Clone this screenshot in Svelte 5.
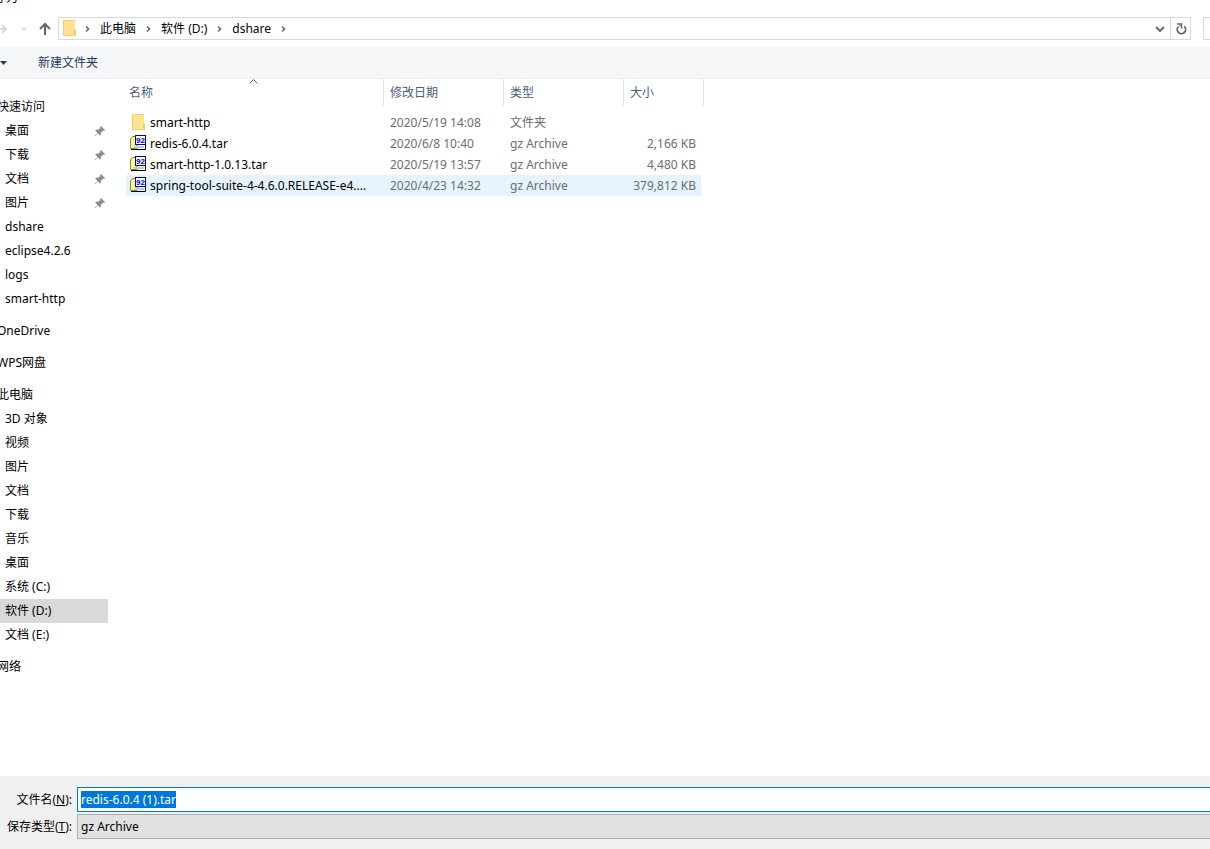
<script lang="ts">
    import { onMount } from 'svelte';

    type NavItem = { name: string; pinned?: boolean; selected?: boolean };
    type NavGroup = { name: string; items: NavItem[] };

    let path = ['此电脑', '软件 (D:)', 'dshare'];

    let groups: NavGroup[] = [
        {
            name: '快速访问',
            items: [
                { name: '桌面', pinned: true },
                { name: '下载', pinned: true },
                { name: '文档', pinned: true },
                { name: '图片', pinned: true },
                { name: 'dshare' },
                { name: 'eclipse4.2.6' },
                { name: 'logs' },
                { name: 'smart-http' }
            ]
        },
        { name: 'OneDrive', items: [] },
        { name: 'WPS网盘', items: [] },
        {
            name: '此电脑',
            items: [
                { name: '3D 对象' },
                { name: '视频' },
                { name: '图片' },
                { name: '文档' },
                { name: '下载' },
                { name: '音乐' },
                { name: '桌面' },
                { name: '系统 (C:)' },
                { name: '软件 (D:)', selected: true },
                { name: '文档 (E:)' }
            ]
        },
        { name: '网络', items: [] }
    ];

    let files = [
        { name: 'smart-http', date: '2020/5/19 14:08', type: '文件夹', size: '', folder: true },
        { name: 'redis-6.0.4.tar', date: '2020/6/8 10:40', type: 'gz Archive', size: '2,166 KB' },
        { name: 'smart-http-1.0.13.tar', date: '2020/5/19 13:57', type: 'gz Archive', size: '4,480 KB' },
        { name: 'spring-tool-suite-4-4.6.0.RELEASE-e4....', date: '2020/4/23 14:32', type: 'gz Archive', size: '379,812 KB', hover: true }
    ];

    let fileName = 'redis-6.0.4 (1).tar';
    let fileInput: HTMLInputElement;

    onMount(() => {
        fileInput.focus();
        fileInput.select();
    });
</script>

{#snippet folderIcon()}
    <svg class="icon" width="16" height="17" viewBox="0 0 16 17" aria-hidden="true">
        <path d="M2 0h12v9l1 1v6H2z" fill="#ffe08a" />
        <path d="M3 1h10v14H3z" fill="#ffe391" />
        <path d="M13 9.500l2 1V16h-2z" fill="#f3ca62" />
        <path d="M2.500 0v15.500H15M2 .5h12" fill="none" stroke="#f0cd70" />
    </svg>
{/snippet}

{#snippet archiveIcon()}
    <svg class="icon" width="16" height="17" viewBox="0 0 16 17" aria-hidden="true">
        <path d="M.5 13.500V4l2-2.500H7v12z" fill="#ffff66" stroke="#8c8c30" />
        <path d="M2 13V4h2v7h10v2z" fill="#f4f4b0" />
        <path d="M4 11h10v2H4z" fill="#c8c8c8" />
        <path d="M1 14.500h14.500V10" fill="none" stroke="#000" />
        <rect x="5" y="0" width="11" height="10" fill="#0000c0" />
        <rect x="6" y="1" width="9" height="8" fill="#fff" />
        <text x="6" y="8" class="badge">92</text>
    </svg>
{/snippet}

{#snippet chevron()}
    <svg class="chevron" width="7" height="8" viewBox="0 0 7 8" aria-hidden="true">
        <path d="M2 1.500L4.500 4 2 6.500" fill="none" stroke="#666" stroke-width="1.600" />
    </svg>
{/snippet}

<div class="dialog">
    <header class="title">另存为</header>

    <div class="address-row">
        <button class="nav forward" aria-label="前进" disabled>
            <svg width="12" height="14" viewBox="0 0 12 14">
                <path d="M0 7h10M6 3l4 4-4 4" fill="none" stroke="#d2d2d2" stroke-width="1.500" />
            </svg>
        </button>
        <button class="nav recent" aria-label="最近浏览的位置" disabled>
            <svg width="8" height="6" viewBox="0 0 8 6">
                <path d="M1.500 1.500L4 4l2.500-2.500" fill="none" stroke="#d2d2d2" stroke-width="1.200" />
            </svg>
        </button>
        <button class="nav up" aria-label="上移">
            <svg width="14" height="14" viewBox="0 0 14 14">
                <path d="M7 13V2M2 7l5-5 5 5" fill="none" stroke="#666" stroke-width="2" />
            </svg>
        </button>
        <nav class="address" aria-label="地址">
            {@render folderIcon()}
            {@render chevron()}
            {#each path as part}
                <a href="#top">{part}</a>
                {@render chevron()}
            {/each}
            <button class="history" aria-label="以前的位置">
                <svg width="10" height="8" viewBox="0 0 10 8">
                    <path d="M1 2l4 4 4-4" fill="none" stroke="#666" stroke-width="1.800" />
                </svg>
            </button>
            <button class="refresh" aria-label="刷新">
                <svg width="12" height="14" viewBox="0 0 12 14">
                    <path d="M9.200 4.300A4.200 4.200 0 1 1 3 5" fill="none" stroke="#666" stroke-width="1.800" />
                    <path d="M2 2h4.500v4.500" fill="none" stroke="#666" stroke-width="1.500" />
                    <path d="M6 2.500L3 5.500" fill="none" stroke="#666" />
                </svg>
            </button>
        </nav>
        <div class="search"></div>
    </div>

    <div class="toolbar">
        <button class="organize" aria-label="组织">
            <svg width="8" height="4" viewBox="0 0 8 4"><path d="M0 0h7L3.500 4z" fill="#1e395b" /></svg>
        </button>
        <button class="new-folder">新建文件夹</button>
    </div>

    <main>
        <aside>
            {#each groups as group}
                <section>
                    <a class="group" href="#top">{group.name}</a>
                    {#each group.items as item}
                        <a class="item" class:selected={item.selected} href="#top">
                            <span>{item.name}</span>
                            {#if item.pinned}
                                <svg width="12" height="12" viewBox="0 0 12 12" aria-hidden="true">
                                    <path d="M7 1l4 4-1 1-1-.3L7.200 7.500 7 9.500l-1 1-2.200-2.200L1 11.300l-.5-.5 3-2.800L1.300 5.800l1-1 2.200-.2L6.300 3 6 2z" fill="#8e8e8e" />
                                </svg>
                            {/if}
                        </a>
                    {/each}
                </section>
            {/each}
        </aside>

        <div class="files">
            <table>
                <colgroup>
                    <col class="col-name" />
                    <col class="col-date" />
                    <col class="col-type" />
                    <col class="col-size" />
                </colgroup>
                <thead>
                    <tr>
                        <th>
                            名称
                            <svg class="sort" width="9" height="5" viewBox="0 0 9 5" aria-hidden="true">
                                <path d="M.5 4.500l4-4 4 4" fill="none" stroke="#666" />
                            </svg>
                        </th>
                        <th>修改日期</th>
                        <th>类型</th>
                        <th>大小</th>
                    </tr>
                </thead>
                <tbody>
                    {#each files as file}
                        <tr class:hover={file.hover}>
                            <td>
                                <div class="name">
                                    {#if file.folder}
                                        {@render folderIcon()}
                                    {:else}
                                        {@render archiveIcon()}
                                    {/if}
                                    <span>{file.name}</span>
                                </div>
                            </td>
                            <td>{file.date}</td>
                            <td>{file.type}</td>
                            <td>{file.size}</td>
                        </tr>
                    {/each}
                </tbody>
            </table>
        </div>
    </main>

    <footer>
        <label for="file-name">文件名(<u>N</u>):</label>
        <input id="file-name" type="text" bind:this={fileInput} bind:value={fileName} />
        <label for="file-type">保存类型(<u>T</u>):</label>
        <select id="file-type">
            <option>gz Archive</option>
        </select>
    </footer>
</div>

<style>
    :global(body) {
        margin: 0;
        background: #fff;
    }

    .dialog {
        display: flex;
        flex-direction: column;
        min-height: 100vh;
        overflow: hidden;
        font-family: 'Noto Sans', 'Noto Sans CJK SC', sans-serif;
        font-size: 12px;
        line-height: 16px;
        color: #000;
    }

    button, input, select {
        font: inherit;
        color: inherit;
        border: 0;
        border-radius: 0;
        margin: 0;
        padding: 0;
        background: none;
    }

    a {
        color: inherit;
        text-decoration: none;
    }

    svg {
        display: block;
        flex: none;
    }

    .title {
        display: flex;
        align-items: flex-end;
        height: 6px;
        margin: 0 0 11px -18px;
        overflow: hidden;
    }

    .address-row {
        display: flex;
        align-items: center;
        height: 23px;
        margin-bottom: 7px;
    }

    .nav {
        display: flex;
        justify-content: center;
        flex: none;
    }

    .forward {
        width: 16px;
        justify-content: flex-start;
        margin-left: -4px;
    }

    .recent {
        width: 24px;
    }

    .up {
        width: 18px;
        margin-right: 4px;
    }

    .address {
        display: flex;
        flex: 1;
        align-items: center;
        box-sizing: border-box;
        height: 23px;
        padding-left: 2px;
        border: 1px solid #d9d9d9;
    }

    .address a {
        white-space: nowrap;
    }

    .address .chevron {
        margin: 0 9px;
    }

    .address .icon + .chevron {
        margin-left: 7px;
    }

    .history {
        display: flex;
        justify-content: center;
        width: 20px;
        margin-left: auto;
    }

    .refresh {
        display: flex;
        align-items: center;
        justify-content: center;
        align-self: stretch;
        width: 20px;
        border-left: 1px solid #d9d9d9;
    }

    .search {
        box-sizing: border-box;
        width: 7px;
        height: 23px;
        margin-left: 12px;
        border: 1px solid #d9d9d9;
        border-right: 0;
    }

    .toolbar {
        display: flex;
        align-items: stretch;
        height: 31px;
        border-bottom: 1px solid #e8edf2;
        background: #f5f6f7;
        color: #1e395b;
    }

    .organize {
        width: 8px;
    }

    .new-folder {
        margin-left: 20px;
        padding: 0 10px;
    }

    main {
        display: flex;
        flex: 1;
    }

    aside {
        flex: none;
        width: 108px;
        padding-top: 16px;
    }

    section {
        margin-bottom: 8px;
    }

    .group, .item {
        display: flex;
        align-items: center;
        height: 24px;
        white-space: nowrap;
    }

    .group {
        margin-left: -3px;
    }

    .item {
        justify-content: space-between;
        padding: 0 2px 0 5px;
    }

    .selected {
        background: #d9d9d9;
    }

    .files {
        flex: 1;
        padding-left: 18px;
    }

    table {
        width: 578px;
        table-layout: fixed;
        border-collapse: separate;
        border-spacing: 0;
    }

    .col-name {
        width: 257px;
    }

    .col-date, .col-type {
        width: 120px;
    }

    .col-size {
        width: 81px;
    }

    th {
        position: relative;
        height: 27px;
        padding: 0 6px;
        border-left: 1px solid #e5e5e5;
        font-weight: normal;
        text-align: left;
        color: #4c607a;
    }

    th:first-child {
        padding-left: 3px;
        border-left: 0;
    }

    th:last-child {
        border-right: 1px solid #e5e5e5;
    }

    .sort {
        position: absolute;
        top: 0;
        left: 123px;
    }

    tbody::before {
        content: '';
        display: block;
        height: 6px;
    }

    td {
        height: 21px;
        padding: 0 0 0 7px;
        color: #6d6d6d;
        white-space: nowrap;
    }

    td:first-child {
        padding-left: 4px;
        color: #000;
    }

    td:last-child {
        padding-right: 5px;
        border-right: 3px solid transparent;
        background-clip: padding-box;
        text-align: right;
    }

    .hover td {
        background-color: #e5f3ff;
    }

    .name {
        display: flex;
        align-items: center;
        gap: 4px;
    }

    .badge {
        font: bold 8px 'Liberation Sans', sans-serif;
        fill: #0000c0;
    }

    footer {
        display: grid;
        grid-template-columns: 72px 1fr;
        grid-auto-rows: 25px;
        gap: 2px 5px;
        align-items: center;
        padding: 11px 0 10px;
        background: #f0f0f0;
    }

    label {
        text-align: right;
        white-space: nowrap;
    }

    input, select {
        box-sizing: border-box;
        width: 100%;
        height: 25px;
        padding: 0 3px;
        outline: 0;
        appearance: none;
    }

    input {
        border: 1px solid #0078d7;
        border-right: 0;
        background: #fff;
    }

    input::selection {
        background: #0078d7;
        color: #fff;
    }

    select {
        border: 1px solid #adadad;
        border-right: 0;
        background: #e1e1e1;
    }
</style>
